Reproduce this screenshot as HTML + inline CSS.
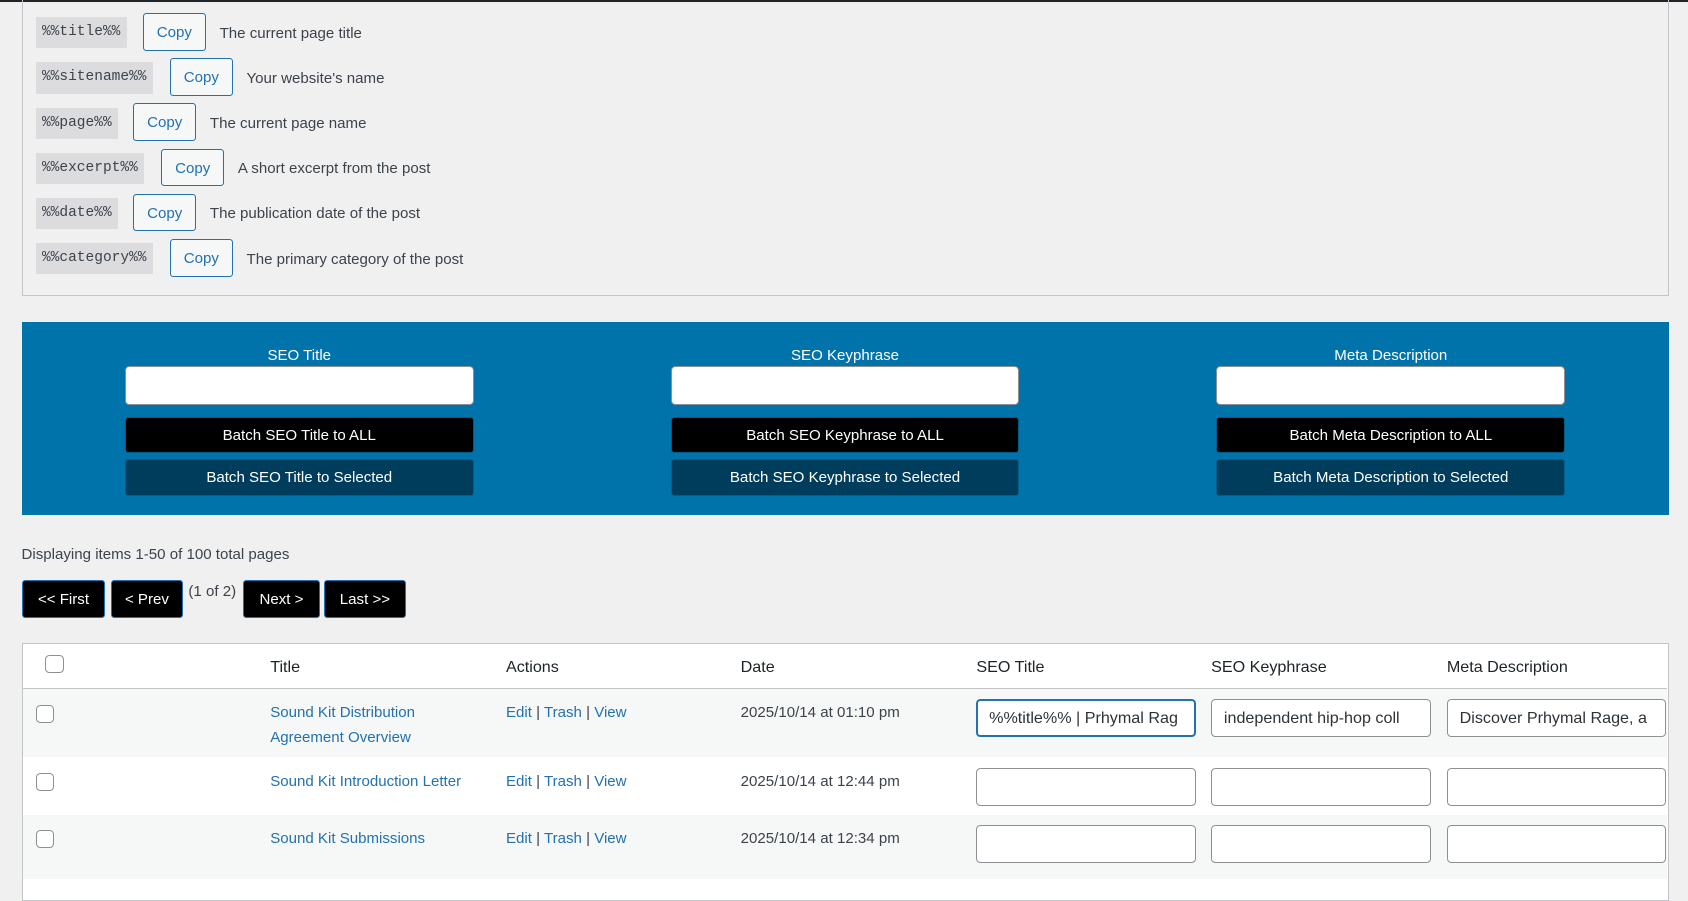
<!DOCTYPE html>
<html><head><meta charset="utf-8"><style>
html{zoom:1.0765}
body{margin:0;width:1568px;height:809px;background:#f0f0f1;font-family:"Liberation Sans",sans-serif;font-size:13.5px;color:#3c434a;position:relative;overflow:hidden}
.a{position:absolute}
.topline{left:0;top:0;width:1568px;height:2px;background:#1d2327}
.panel{left:20px;top:-2px;width:1530px;height:277px;border:1px solid #c3c4c7;box-sizing:border-box}
code{position:absolute;left:33px;height:29px;line-height:29px;background:#dcdcde;font-family:"Liberation Mono",monospace;font-size:13.5px;padding:0 6px;color:#3c434a}
.cp{position:absolute;height:35px;width:58px;box-sizing:border-box;border:1px solid #2271b1;border-radius:3px;background:#f6f7f7;color:#2271b1;text-align:center;line-height:35px;font-size:14px}
.ds{position:absolute;line-height:20px;font-size:14px}
.blue{left:20px;top:299px;width:1530px;height:179px;background:#0073aa}
.col{position:absolute;top:0;width:324px}
.col .l{position:absolute;top:23px;width:100%;text-align:center;color:#fff;font-size:14px}
.col .i{position:absolute;top:41px;width:324px;height:36px;box-sizing:border-box;background:#fff;border:1px solid #8c8f94;border-radius:4px}
.col .b1,.col .b2{position:absolute;width:324px;height:34px;box-sizing:border-box;border-radius:3px;color:#fff;text-align:center;line-height:34px;font-size:14px}
.col .b1{top:88px;background:#000;border:1px solid #005a87}
.col .b2{top:127px;height:35px;background:#003d5c;border:1px solid #005f8d}
.pg{position:absolute;top:539px;height:35px;box-sizing:border-box;background:#000;border:1px solid #2271b1;border-radius:3px;color:#fff;text-align:center;line-height:35px;font-size:14px}
.tbl{left:20px;top:597px;width:1530px;height:240px;border:1px solid #c3c4c7;box-sizing:border-box;background:#fff}
.hd{position:absolute;top:611px;font-size:15px;color:#1d2327}
.row{position:absolute;left:21px;width:1528px}
.cb{position:absolute;width:17px;height:17px;border:1px solid #8c8f94;border-radius:4px;background:#fff;box-sizing:border-box}
.lk{color:#2271b1}
.t{position:absolute;font-size:14px;line-height:23px}
.in{position:absolute;width:204px;height:36px;box-sizing:border-box;border:1px solid #8c8f94;border-radius:4px;background:#fff;font-size:15px;line-height:34px;padding-left:11px;white-space:nowrap;overflow:hidden;color:#2c3338}
</style></head><body>
<div class="a topline"></div>
<div class="a panel"></div>
<code style="top:16px">%%title%%</code><div class="cp" style="left:133px;top:12px">Copy</div><div class="ds" style="left:204px;top:21px">The current page title</div>
<code style="top:58px">%%sitename%%</code><div class="cp" style="left:158px;top:54px">Copy</div><div class="ds" style="left:229px;top:63px">Your website's name</div>
<code style="top:100px">%%page%%</code><div class="cp" style="left:124px;top:96px">Copy</div><div class="ds" style="left:195px;top:105px">The current page name</div>
<code style="top:142px">%%excerpt%%</code><div class="cp" style="left:150px;top:138px">Copy</div><div class="ds" style="left:221px;top:147px">A short excerpt from the post</div>
<code style="top:184px">%%date%%</code><div class="cp" style="left:124px;top:180px">Copy</div><div class="ds" style="left:195px;top:189px">The publication date of the post</div>
<code style="top:226px">%%category%%</code><div class="cp" style="left:158px;top:222px">Copy</div><div class="ds" style="left:229px;top:231px">The primary category of the post</div>

<div class="a blue">
 <div class="col" style="left:96px"><div class="l">SEO Title</div><div class="i"></div><div class="b1">Batch SEO Title to ALL</div><div class="b2">Batch SEO Title to Selected</div></div>
 <div class="col" style="left:603px"><div class="l">SEO Keyphrase</div><div class="i"></div><div class="b1">Batch SEO Keyphrase to ALL</div><div class="b2">Batch SEO Keyphrase to Selected</div></div>
 <div class="col" style="left:1110px"><div class="l">Meta Description</div><div class="i"></div><div class="b1">Batch Meta Description to ALL</div><div class="b2">Batch Meta Description to Selected</div></div>
</div>

<div class="ds" style="left:20px;top:505px">Displaying items 1-50 of 100 total pages</div>
<div class="pg" style="left:20px;width:78px">&lt;&lt; First</div>
<div class="pg" style="left:103px;width:67px">&lt; Prev</div>
<div class="ds" style="left:175px;top:540px">(1 of 2)</div>
<div class="pg" style="left:226px;width:71px">Next &gt;</div>
<div class="pg" style="left:301px;width:76px">Last &gt;&gt;</div>

<div class="a tbl"></div>
<div class="row" style="top:639px;height:1px;background:#c3c4c7"></div>
<div class="cb" style="left:42px;top:608px"></div>
<div class="hd" style="left:251px">Title</div><div class="hd" style="left:470px">Actions</div><div class="hd" style="left:688px">Date</div><div class="hd" style="left:907px">SEO Title</div><div class="hd" style="left:1125px">SEO Keyphrase</div><div class="hd" style="left:1344px">Meta Description</div>

<div class="row" style="top:640px;height:63px;background:#f6f7f7"></div>
<div class="row" style="top:757px;height:60px;background:#f6f7f7"></div>

<div class="cb" style="left:33px;top:655px"></div>
<div class="t lk" style="left:251px;top:651px;width:190px">Sound Kit Distribution Agreement Overview</div>
<div class="t" style="left:470px;top:651px"><span class="lk">Edit</span> | <span class="lk">Trash</span> | <span class="lk">View</span></div>
<div class="t" style="left:688px;top:651px">2025/10/14 at 01:10 pm</div>
<div class="in" style="left:907px;top:649px;border:2px solid #2271b1;line-height:32px;padding-left:10px">%%title%% | Prhymal Rag</div>
<div class="in" style="left:1125px;top:649px">independent hip-hop coll</div>
<div class="in" style="left:1344px;top:649px">Discover Prhymal Rage, a</div>

<div class="cb" style="left:33px;top:718px"></div>
<div class="t lk" style="left:251px;top:715px">Sound Kit Introduction Letter</div>
<div class="t" style="left:470px;top:715px"><span class="lk">Edit</span> | <span class="lk">Trash</span> | <span class="lk">View</span></div>
<div class="t" style="left:688px;top:715px">2025/10/14 at 12:44 pm</div>
<div class="in" style="left:907px;top:713px"></div><div class="in" style="left:1125px;top:713px"></div><div class="in" style="left:1344px;top:713px"></div>

<div class="cb" style="left:33px;top:771px"></div>
<div class="t lk" style="left:251px;top:768px">Sound Kit Submissions</div>
<div class="t" style="left:470px;top:768px"><span class="lk">Edit</span> | <span class="lk">Trash</span> | <span class="lk">View</span></div>
<div class="t" style="left:688px;top:768px">2025/10/14 at 12:34 pm</div>
<div class="in" style="left:907px;top:766px"></div><div class="in" style="left:1125px;top:766px"></div><div class="in" style="left:1344px;top:766px"></div>
</body></html>
